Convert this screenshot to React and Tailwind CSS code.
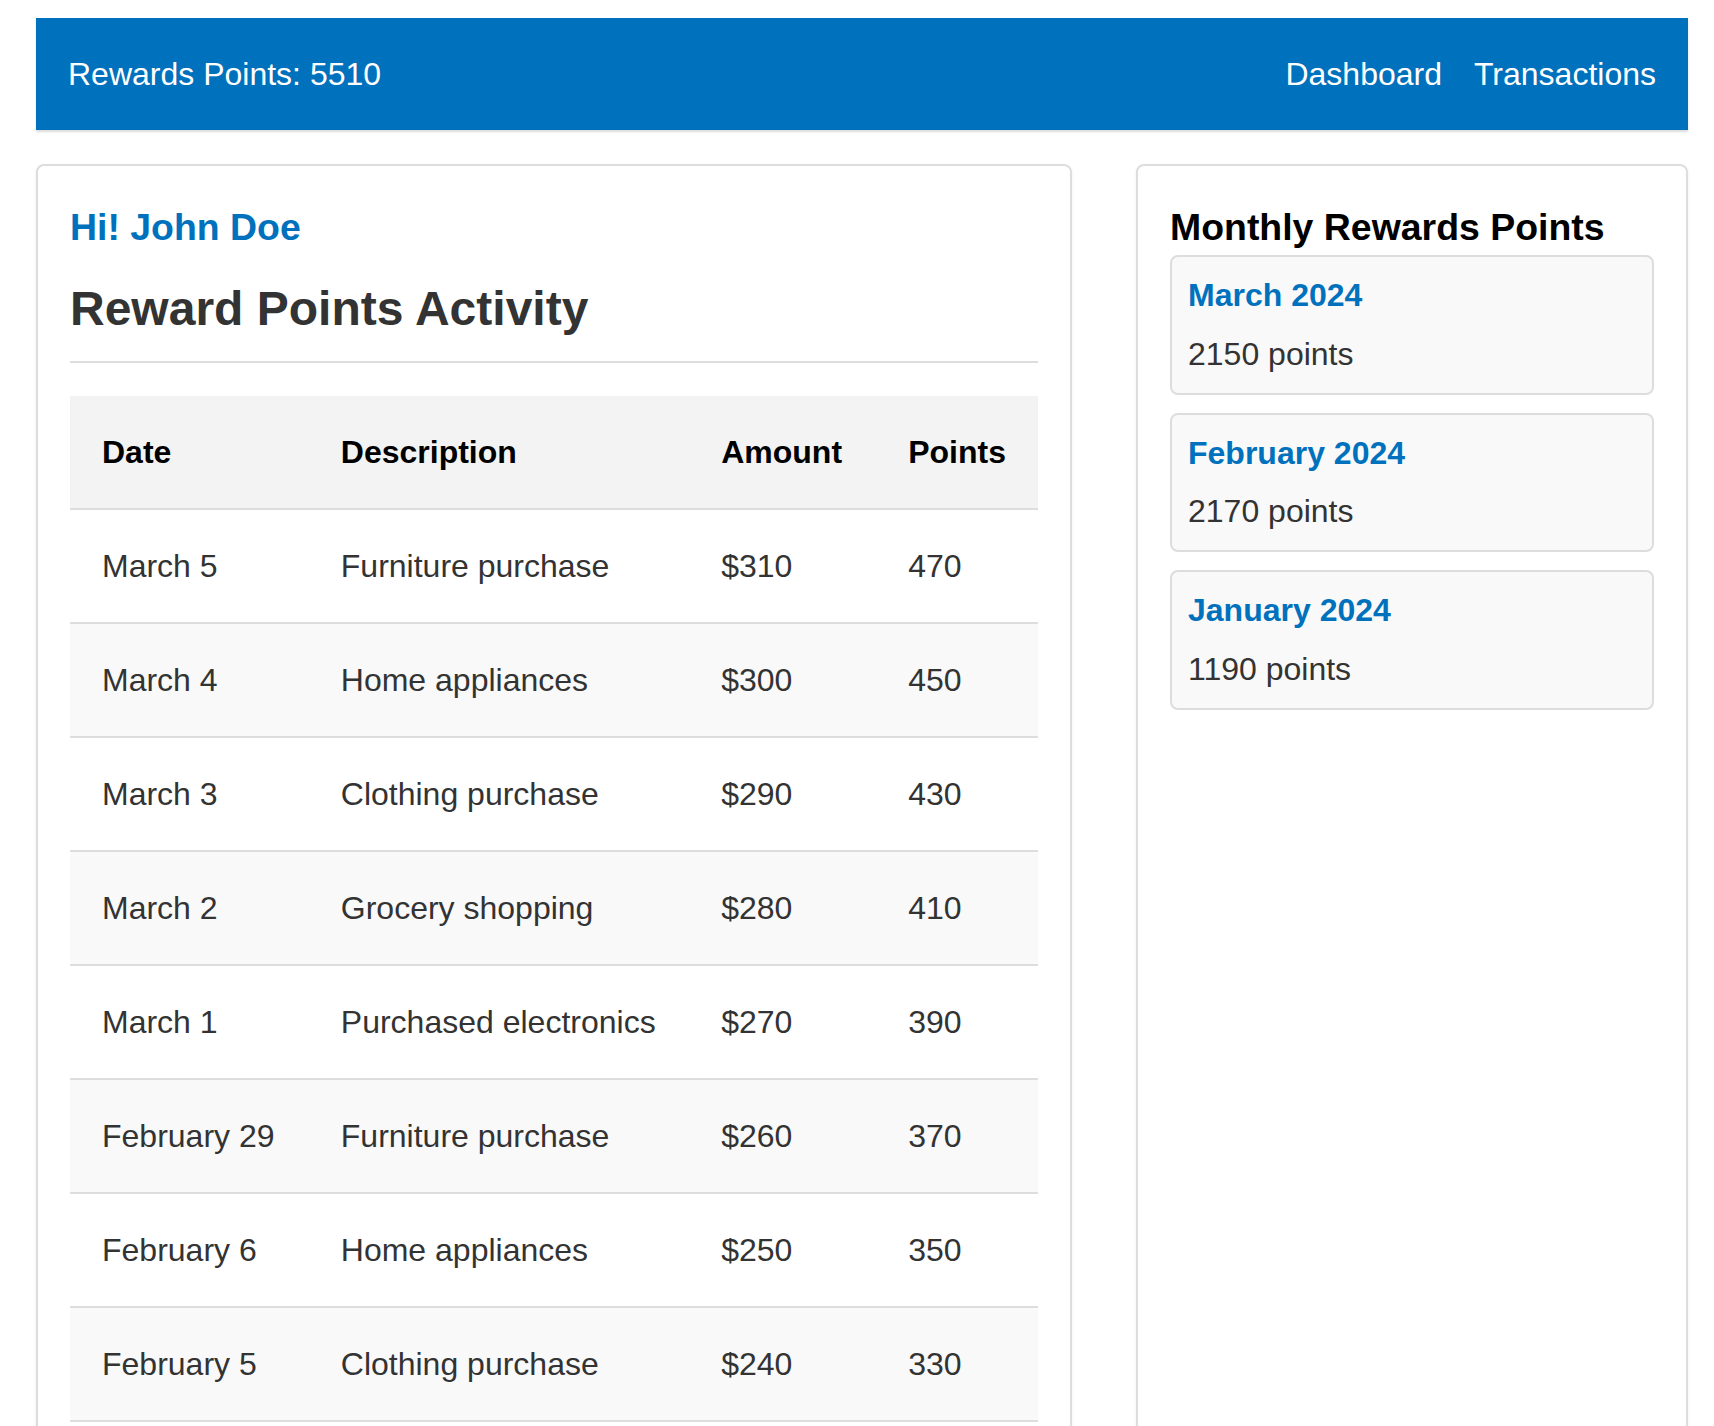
import React from 'react';

const transactions = [
  { date: 'March 5', desc: 'Furniture purchase', amount: '$310', points: 470 },
  { date: 'March 4', desc: 'Home appliances', amount: '$300', points: 450 },
  { date: 'March 3', desc: 'Clothing purchase', amount: '$290', points: 430 },
  { date: 'March 2', desc: 'Grocery shopping', amount: '$280', points: 410 },
  { date: 'March 1', desc: 'Purchased electronics', amount: '$270', points: 390 },
  { date: 'February 29', desc: 'Furniture purchase', amount: '$260', points: 370 },
  { date: 'February 6', desc: 'Home appliances', amount: '$250', points: 350 },
  { date: 'February 5', desc: 'Clothing purchase', amount: '$240', points: 330 },
  { date: 'February 4', desc: 'Grocery shopping', amount: '$230', points: 310 },
  { date: 'February 3', desc: 'Purchased electronics', amount: '$220', points: 290 },
  { date: 'February 2', desc: 'Furniture purchase', amount: '$210', points: 270 },
  { date: 'February 1', desc: 'Home appliances', amount: '$200', points: 250 },
];

const monthly = [
  { month: 'March 2024', points: 2150 },
  { month: 'February 2024', points: 2170 },
  { month: 'January 2024', points: 1190 },
];

export default function App() {
  return (
    <div className="min-h-screen bg-white pt-[18px] pl-[36px] font-['Liberation_Sans',Arial,sans-serif] text-[32px] leading-[1.15] text-[#333]">
      <div className="w-[1652px]">
        {/* Top bar */}
        <header className="flex h-[112px] items-center justify-between bg-[#0071bc] px-[32px] text-white shadow-[0_2px_2px_rgba(0,0,0,0.14)]">
          <span>Rewards Points: 5510</span>
          <nav className="flex gap-[32px]">
            <a href="#">Dashboard</a>
            <a href="#">Transactions</a>
          </nav>
        </header>

        <div className="mt-[34px] flex items-stretch gap-[64px]">
          {/* Activity card */}
          <section className="w-[1036px] rounded-[8px] border-2 border-[#dddddd] px-[32px] pt-[40px] pb-[32px] shadow-[0_2px_4px_rgba(0,0,0,0.06)]">
            <h3 className="text-[37.44px] font-bold text-[#0071bc]">Hi! John Doe</h3>
            <h2 className="mt-[32px] border-b-2 border-[#dddddd] pb-[25px] text-[48px] font-bold text-[#333]">
              Reward Points Activity
            </h2>
            <table className="mt-[33px] w-full border-collapse text-left">
              <thead>
                <tr className="border-b-2 border-[#dddddd] bg-[#f3f3f3] text-black">
                  <th className="h-[113px] w-[239px] px-[32px] font-bold">Date</th>
                  <th className="h-[113px] w-[381px] px-[32px] font-bold">Description</th>
                  <th className="h-[113px] w-[187px] px-[32px] font-bold">Amount</th>
                  <th className="h-[113px] px-[32px] font-bold">Points</th>
                </tr>
              </thead>
              <tbody>
                {transactions.map((t, i) => (
                  <tr
                    key={t.date}
                    className={
                      i % 2 === 1
                        ? 'border-b-2 border-[#dddddd] bg-[#f9f9f9]'
                        : 'border-b-2 border-[#dddddd] bg-white'
                    }
                  >
                    <td className="h-[114px] px-[32px]">{t.date}</td>
                    <td className="h-[114px] px-[32px]">{t.desc}</td>
                    <td className="h-[114px] px-[32px]">{t.amount}</td>
                    <td className="h-[114px] px-[32px]">{t.points}</td>
                  </tr>
                ))}
              </tbody>
            </table>
          </section>

          {/* Monthly summary */}
          <aside className="w-[552px] rounded-[8px] border-2 border-[#dddddd] px-[32px] pt-[40px] shadow-[0_2px_4px_rgba(0,0,0,0.06)]">
            <h3 className="text-[37.44px] font-bold text-black">Monthly Rewards Points</h3>
            <div className="mt-[6px] flex flex-col gap-[18px]">
              {monthly.map((m) => (
                <div
                  key={m.month}
                  className="rounded-[8px] border-2 border-[#dddddd] bg-[#f9f9f9] px-[16px] py-[20px]"
                >
                  <h4 className="font-bold text-[#0071bc]">{m.month}</h4>
                  <p className="mt-[22px]">{m.points} points</p>
                </div>
              ))}
            </div>
          </aside>
        </div>
      </div>
    </div>
  );
}
